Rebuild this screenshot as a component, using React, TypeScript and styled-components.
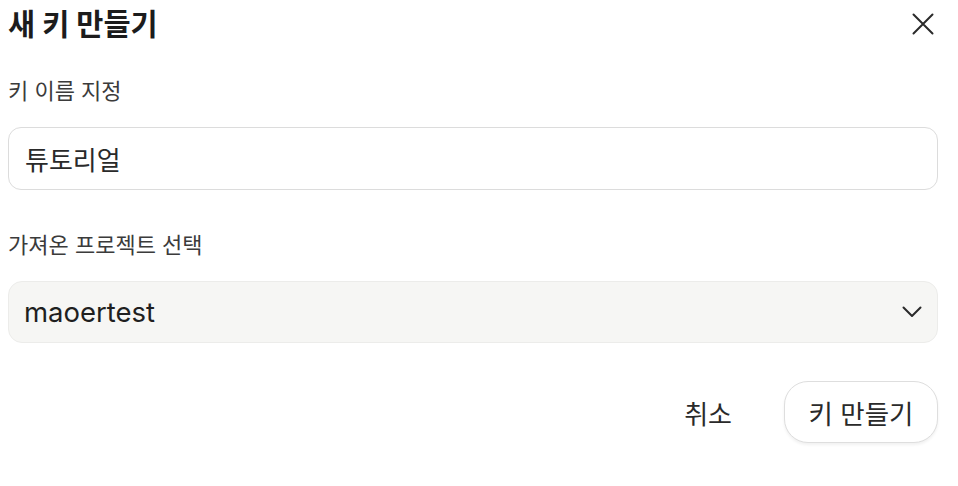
import React from "react";
import styled, { createGlobalStyle } from "styled-components";

const Global = createGlobalStyle`
  html, body { margin: 0; padding: 0; background: #ffffff; }
  body { font-family: Inter, "Noto Sans CJK KR", sans-serif; color: #1f1f1f; }
  * { box-sizing: border-box; }
`;

const Dialog = styled.div`
  width: 958px;
  height: 486px;
  padding: 0 20px 0 8px;
  display: flex;
  flex-direction: column;
  background: #fff;
`;

const Header = styled.div`
  height: 48px;
  display: flex;
  align-items: center;
  justify-content: space-between;
`;

const Title = styled.h1`
  margin: 0;
  font-family: Inter, "Noto Sans CJK KR", sans-serif;
  font-size: 29.5px;
  font-weight: 700;
  color: #1c1c1c;
  line-height: 36px;
`;

const CloseButton = styled.button`
  border: none;
  background: transparent;
  padding: 0;
  width: 24px;
  height: 24px;
  display: flex;
  align-items: center;
  justify-content: center;
  color: #2a2a2a;
  margin-right: 3px;
  cursor: pointer;
`;

const Field = styled.div<{ $mt: number }>`
  display: flex;
  flex-direction: column;
  gap: 24px;
  margin-top: ${(p) => p.$mt}px;
`;

const Label = styled.label`
  font-family: Inter, "Noto Sans CJK KR", sans-serif;
  font-size: 22px;
  line-height: 24px;
  color: #3b3b3b;
`;

const TextInput = styled.div`
  height: 63px;
  border: 1.5px solid #dcdcdc;
  border-radius: 13px;
  background: #fff;
  display: flex;
  align-items: center;
  padding: 0 16px;
  font-size: 26px;
  color: #2a2a2a;
`;

const Select = styled.div`
  height: 62px;
  border: 1.5px solid #ececea;
  border-radius: 14px;
  background: #f6f6f4;
  display: flex;
  align-items: center;
  justify-content: space-between;
  padding: 0 15px 0 15px;
  font-size: 27.5px;
  color: #1f1f1f;
`;

const Footer = styled.div`
  margin-top: 38px;
  display: flex;
  justify-content: flex-end;
  align-items: center;
  gap: 28px;
`;

const GhostButton = styled.button`
  border: none;
  background: transparent;
  font-family: Inter, "Noto Sans CJK KR", sans-serif;
  font-size: 26px;
  color: #2a2a2a;
  padding: 0 24px;
  height: 62px;
`;

const OutlineButton = styled.button`
  height: 62px;
  width: 154px;
  border: 1.5px solid #dedede;
  border-radius: 24px;
  background: #fff;
  box-shadow: 0 2px 3px rgba(0, 0, 0, 0.06);
  font-family: Inter, "Noto Sans CJK KR", sans-serif;
  font-size: 26.5px;
  color: #2a2a2a;
  display: flex;
  align-items: center;
  justify-content: center;
`;

export default function App() {
  return (
    <>
      <Global />
      <Dialog>
        <Header>
          <Title>새 키 만들기</Title>
          <CloseButton aria-label="닫기">
            <svg width="22" height="22" viewBox="0 0 22 22" fill="none">
              <path d="M1.5 1.5 L20.5 20.5 M20.5 1.5 L1.5 20.5" stroke="currentColor" strokeWidth="2" strokeLinecap="round" />
            </svg>
          </CloseButton>
        </Header>
        <Field $mt={31}>
          <Label>키 이름 지정</Label>
          <TextInput>튜토리얼</TextInput>
        </Field>
        <Field $mt={43}>
          <Label>가져온 프로젝트 선택</Label>
          <Select>
            <span>maoertest</span>
            <svg width="20" height="12" viewBox="0 0 20 12" fill="none">
              <path d="M1.5 1.5 L10 10 L18.5 1.5" stroke="#2a2a2a" strokeWidth="2" strokeLinecap="round" strokeLinejoin="round" />
            </svg>
          </Select>
        </Field>
        <Footer>
          <GhostButton>취소</GhostButton>
          <OutlineButton>키 만들기</OutlineButton>
        </Footer>
      </Dialog>
    </>
  );
}
